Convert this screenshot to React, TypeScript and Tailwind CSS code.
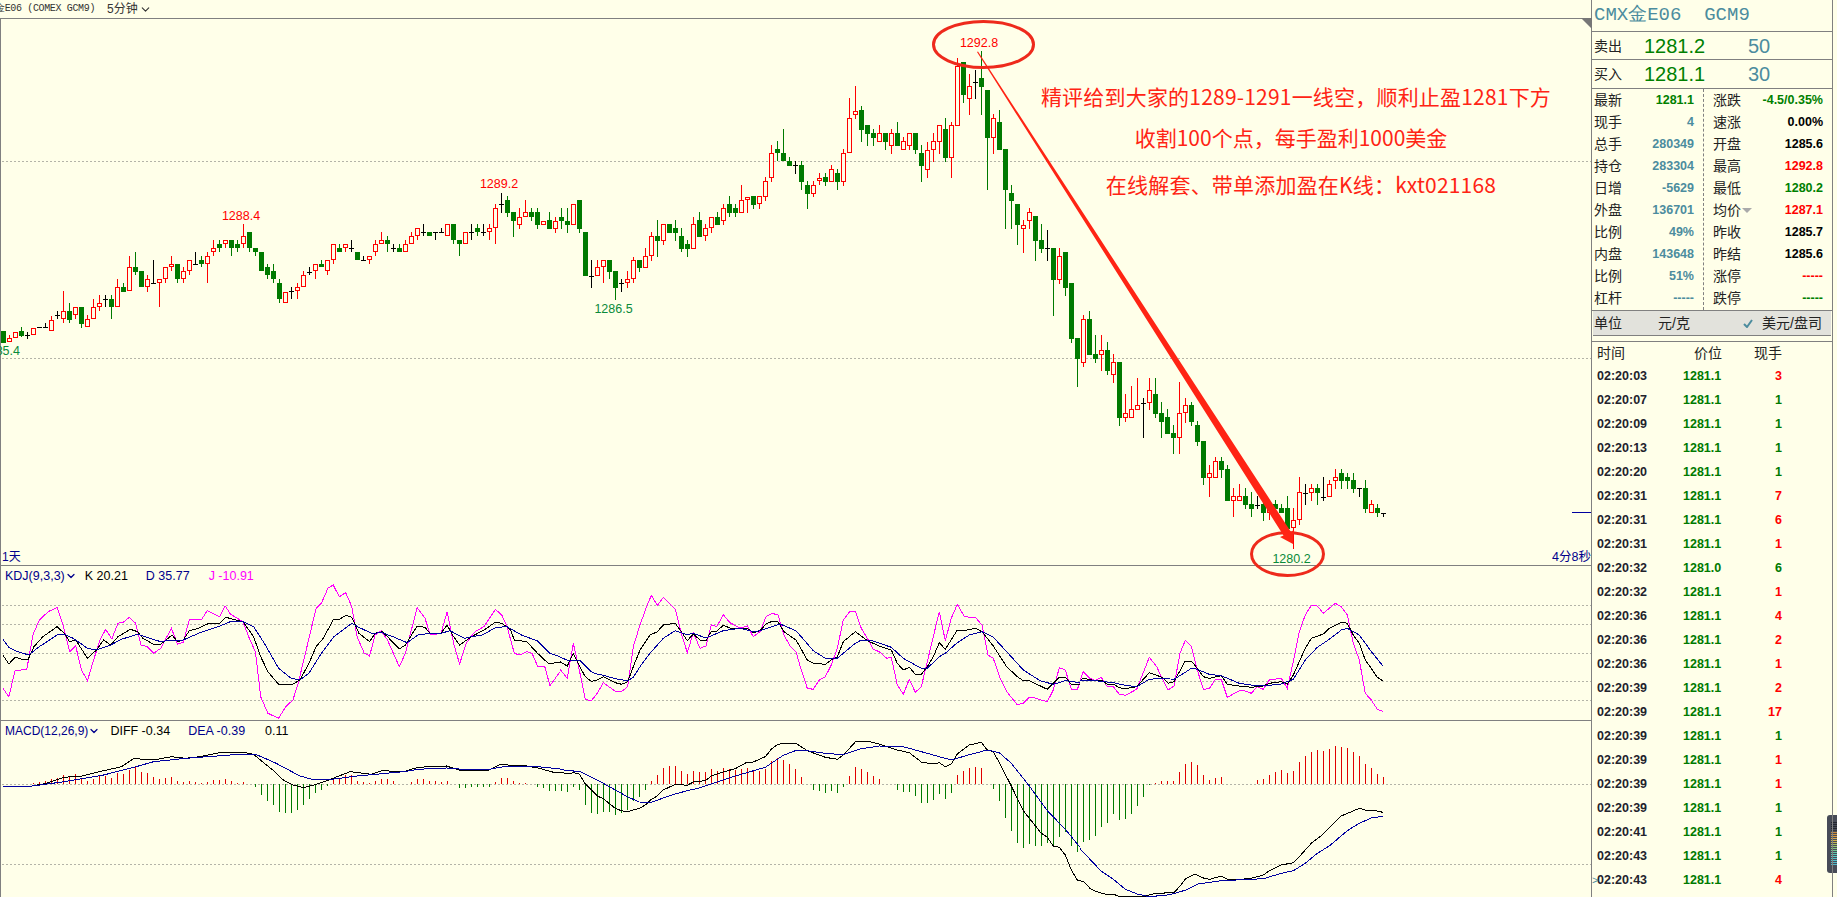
// CMX gold 5-minute chart with KDJ / MACD panes and the quote side panel.
// Chart series are traced from the picture, so the numbers are raw pixel reads.

import { ChevronDown } from 'lucide-react';

const SANS = "font-['Liberation_Sans','Noto_Sans_CJK_SC',sans-serif]";
const NOTE = "absolute left-[1039px] whitespace-nowrap text-center text-[21px] leading-[28px] text-[#ff2414] font-['Noto_Sans_CJK_SC',sans-serif]";

type Candle = [string, number, number, number?, number?];

// [kind, body top, body bottom, wick top, wick bottom], y in 3x picture pixels
const CANDLES: Candle[] = [
  ['g',993,1028],['r',1015,1027,1005,1027],['r',995,1015],['g',993,1007,981,1010],['k',1005,1005,995,1017],['r',983,1005],['k',982,982],['k',982,982,970,982],
  ['r',959,994,947,994],['k',946,946,934,958],['r',934,958,873,970],['g',934,959,909,970],['r',922,946,922,958],['g',922,971,922,983],['r',958,982,946,982],['r',922,958,898,958],
  ['r',910,922,885,934],['k',898,898,885,922],['g',898,922,885,958],['r',862,922,838,922],['g',862,875,850,875],['r',802,874,768,874],['g',802,815,757,826],['g',814,862],
  ['r',838,862,826,875],['k',850,850,780,850],['r',838,850,838,922],['r',802,838,802,850],['r',793,802,768,814],['g',793,838,793,850],['r',814,838,802,850],['r',781,814,781,826],
  ['k',793,793,757,793],['g',781,793,769,802],['r',769,793,757,850],['r',745,757,721,769],['g',733,745,721,757],['r',721,733,721,745],['g',721,745,721,769],['g',733,745,721,757],
  ['r',709,733,673,745],['g',697,745,697,757],['g',745,757,745,769],['g',757,814],['g',802,826,793,838],['g',814,838,793,850],['g',850,898,838,910],['r',875,910],
  ['k',874,874,862,898],['r',862,874,850,898],['r',826,862,814,862],['k',815,815,802,826],['r',793,814,793,838],['g',793,802,781,802],['r',781,814,781,826],['r',733,781,733,793],
  ['g',745,757,733,757],['r',733,745,733,757],['k',745,745,721,757],['g',757,781],['k',780,780,769,781],['r',769,781,769,793],['r',733,757,721,769],['r',721,733,697,733],
  ['g',721,733,709,757],['k',745,745,733,757],['g',745,757,733,757],['r',733,757,721,757],['r',709,733,697,733],['r',685,709,685,721],['k',697,697,673,709],['g',697,709],
  ['k',697,697,697,721],['k',697,697,685,697],['r',673,709],['g',673,721,673,733],['g',721,733,721,769],['r',697,733],['k',697,697,673,721],['g',685,697,673,709],
  ['k',697,697,673,709],['r',685,697,673,721],['r',625,685,613,733],['k',612,612,578,638],['g',600,638,588,650],['g',636,662,636,710],['r',650,674,625,686],['r',637,650,600,650],
  ['g',637,650,625,662],['g',637,674,625,686],['r',662,674],['g',660,686,637,686],['r',662,686,650,698],['g',650,662,625,686],['g',662,674,625,698],['r',613,674],
  ['g',600,686,600,698],['g',697,827],['k',827,827,780,863],['r',802,827,780,827],['r',781,802,781,850],['g',781,815,781,838],['g',813,863,813,899],['k',850,850,838,875],
  ['r',838,850,813,863],['r',781,838,770,850],['g',781,803,781,815],['r',769,803,745,803],['r',709,769,697,782],['g',709,722,660,770],['r',673,722,673,734],['g',673,698],
  ['g',685,698,660,722],['g',709,746,685,757],['g',733,746,721,770],['r',673,746,650,746],['g',660,710,637,710],['r',685,709,673,722],['r',650,685,650,698],['g',650,674,637,674],
  ['r',625,662,613,674],['g',613,638,588,650],['g',625,638,613,650],['r',601,638,555,638],['r',590,601,590,638],['g',589,614,589,626],['r',589,613,589,626],['r',544,590,532,602],
  ['r',460,533,436,545],['g',448,460,424,484],['g',460,484,388,484],['g',484,497,472,497],['k',495,495,484,521],['g',496,545,484,570],['g',556,581,544,627],['r',556,581,544,590],
  ['r',533,544,520,556],['g',532,545,520,557],['r',508,545,496,545],['g',520,545,508,570],['r',460,545,448,557],['r',355,460,295,460],['r',332,344,258,356],['g',331,389,319,425],
  ['g',376,401,376,437],['g',400,413,388,437],['r',400,425,376,425],['g',400,425,400,449],['r',400,437,388,461],['g',400,437,366,437],['r',424,449,412,449],['r',400,437,400,449],
  ['g',400,449,400,461],['g',460,497,436,545],['r',449,509,425,533],['r',424,449,400,485],['r',376,425,376,461],['g',388,473,354,485],['r',376,473,366,533],['r',198,377,175,377],
  ['g',187,285,187,308],['r',259,296,222,344],['k',247,247,210,296],['g',235,260,153,344],['g',271,413,271,570],['r',355,413,343,461],['g',367,449,331,449],['g',448,570,448,686],
  ['g',580,602,556,686],['g',613,674,613,734],['r',674,686,660,758],['r',637,662,625,686],['g',649,722,649,782],['g',720,747,673,759],['k',745,745,690,783],['g',744,840,744,948],
  ['r',768,840,744,852],['g',756,864,756,888],['g',849,1017,849,1029],['g',1014,1077,1014,1161],['r',957,1088,945,1101],['g',957,1065,933,1065],['g',1062,1077,1005,1089],['r',1050,1065,1005,1113],
  ['g',1050,1113,1026,1125],['r',1086,1125,1062,1149],['g',1086,1254,1086,1278],['r',1239,1254,1182,1266],['r',1227,1254,1158,1254],['r',1215,1230,1134,1230],['k',1208,1208,1194,1314],['r',1170,1209,1134,1230],
  ['g',1182,1242,1134,1254],['g',1239,1266,1206,1314],['g',1251,1302,1227,1302],['g',1299,1314,1275,1362],['r',1239,1314,1146,1362],['r',1215,1240,1194,1270],['g',1215,1266,1206,1278],['g',1275,1326,1263,1338],
  ['g',1323,1434,1323,1455],['r',1419,1434,1395,1491],['r',1383,1434,1371,1434],['g',1383,1410,1371,1434],['g',1407,1503,1395,1503],['r',1488,1503,1464,1551],['r',1488,1503,1452,1503],['g',1488,1515,1464,1527],
  ['g',1512,1527,1476,1551],['k',1515,1515,1488,1527],['g',1512,1539,1500,1563],['r',1512,1539,1512,1560],['g',1512,1527,1500,1540],['g',1524,1539,1512,1539],['g',1524,1587,1488,1587],['r',1560,1585,1524,1647],
  ['r',1476,1561,1431,1575],['k',1479,1479,1452,1515],['r',1464,1479,1452,1503],['g',1464,1479,1452,1515],['k',1490,1490,1431,1503],['r',1452,1490,1440,1490],['r',1431,1443,1407,1467],['g',1419,1443,1407,1467],
  ['g',1431,1443,1419,1467],['g',1440,1467,1419,1479],['k',1465,1465,1465,1491],['g',1464,1527,1440,1539],['r',1512,1539,1500,1539],['g',1524,1539,1512,1551],['k',1539,1539,1539,1551],
];

const KDJ_J6 = '8,445 25,470 42,392 75,388 92,285 110,240 135,215 160,202 175,250 195,335 212,318 228,390 245,422 262,360 280,300 296,268 313,297 330,250 345,247 362,232 380,250 395,315 412,320 430,340 450,325 480,265 497,312 513,307 530,240 565,238 580,212 615,230 630,197 645,222 680,245 700,300 715,335 730,470 750,520 780,535 800,500 820,480 835,430 855,340 885,205 900,190 918,145 933,135 950,170 968,158 985,200 1000,290 1020,340 1035,348 1050,285 1067,272 1085,300 1118,380 1135,340 1168,203 1190,235 1205,285 1235,280 1252,215 1270,310 1287,372 1305,310 1330,275 1355,260 1387,208 1405,225 1420,260 1440,340 1455,345 1475,335 1490,340 1505,378 1525,378 1540,437 1568,395';
const KDJ_J7 = '0,328 22,355 40,250 58,330 76,418 94,422 112,400 130,368 166,394 185,394 203,380 220,260 240,195 258,145 274,106 292,136 310,112 346,148 364,220 382,278 400,218 420,265 438,258 454,194 470,200 490,164 510,188 540,204 562,198 580,230 600,215 618,170 636,160 654,165 672,225 690,258 708,275 724,330 742,385 760,388 778,360 796,350 814,315 832,265 850,180 868,156 886,154 904,205 922,235 940,268 958,275 980,295 994,292 1012,375 1030,403 1048,358 1066,397 1084,380 1120,230 1138,155 1156,242 1174,175 1192,133 1212,168 1228,172 1246,172 1266,195 1284,285 1300,295 1320,355 1340,395 1372,434 1390,430 1408,412 1426,414 1444,420 1462,425 1480,390 1498,323 1516,330 1534,388 1552,388 1560,368';
const KDJ_J8 = '0,362 10,335 30,355 46,362 64,352 80,378 100,380 118,403 136,406 170,388 208,292 230,320 246,355 264,390 282,378 300,280 316,241 334,258 352,330 370,388 388,386 406,358 424,358 442,412 478,392 496,393 514,400 532,380 550,388 568,360 604,355 622,385 640,305 658,215 676,165 694,136 712,138 730,160 766,130 784,140 802,165 820,250 838,300 856,400 874,420 892,448 908,454';

const KDJ_K6 = '8,345 25,372 42,352 60,357 78,360 95,320 120,290 160,260 180,280 195,305 212,300 245,355 270,330 290,300 310,315 330,290 365,268 385,275 400,295 430,313 450,313 482,285 497,305 513,300 530,272 555,265 585,250 615,250 632,232 680,245 710,290 730,350 750,395 780,433 815,435 840,420 865,370 885,320 905,295 933,240 950,238 970,226 985,232 1005,280 1035,305 1050,280 1070,275 1085,290 1118,327 1135,315 1168,258 1190,262 1205,282 1235,280 1252,255 1270,290 1287,315 1320,290 1355,270 1387,247 1405,250 1430,270 1440,300 1475,305 1505,340 1535,370 1568,368';
const KDJ_K7 = '0,305 22,318 40,280 58,318 76,350 94,364 112,360 130,350 166,368 185,373 203,365 220,320 240,270 270,225 292,215 310,195 346,190 364,215 382,242 400,222 420,240 438,242 454,214 470,214 490,196 510,204 540,205 562,205 580,218 600,212 618,192 636,184 654,186 672,215 708,240 742,300 760,310 796,313 814,300 832,290 850,245 886,215 904,228 922,242 958,258 994,270 1012,310 1030,330 1048,322 1066,343 1084,343 1102,320 1120,290 1138,248 1156,268 1192,210 1212,212 1246,205 1266,215 1300,258 1340,320 1372,350 1390,362 1408,362 1462,388 1498,352 1516,352 1534,373 1560,372';
const KDJ_K8 = '0,362 10,355 46,362 64,360 80,372 100,372 118,383 136,386 170,380 208,338 246,352 264,370 282,365 316,303 334,303 352,325 370,350 388,355 424,347 442,373 478,378 514,382 550,378 568,370 604,365 622,372 640,345 676,265 694,235 730,222 748,205 784,187 802,190 820,225 838,250 856,300 874,325 892,352 908,362';

const KDJ_D6 = '8,298 25,322 42,332 80,345 110,320 160,285 180,283 205,295 245,325 270,330 310,315 340,298 385,283 420,295 450,305 482,300 513,300 560,278 610,260 650,243 680,245 710,260 740,310 780,385 815,415 840,420 865,400 900,340 935,290 985,250 1005,262 1040,280 1070,278 1100,290 1140,308 1170,285 1205,280 1235,280 1260,272 1300,295 1320,290 1350,285 1390,262 1420,260 1460,285 1505,303 1540,340 1568,350';
const KDJ_D7 = '0,292 22,300 58,300 94,335 112,343 130,346 166,356 203,362 220,352 240,320 270,280 310,235 346,212 382,224 400,220 438,234 490,212 540,205 580,215 600,212 660,192 708,212 760,272 796,295 832,295 886,250 904,240 940,243 994,262 1030,295 1084,325 1102,325 1138,290 1156,280 1192,248 1228,225 1266,215 1300,232 1340,275 1390,330 1440,362 1480,373 1516,362 1560,368';
const KDJ_D8 = '0,362 46,362 100,368 136,376 170,380 208,358 246,355 282,358 316,337 334,325 352,328 388,343 424,347 478,370 514,375 550,378 604,372 640,358 676,300 712,262 748,238 784,210 802,205 838,225 872,272 908,317';

const MACD_K6 = '8,738 90,738 130,730 180,712 230,708 290,692 340,680 375,655 400,658 440,658 480,650 520,655 560,650 620,637 680,637 710,643 740,670 770,695 790,718 820,735 850,743 880,735 920,720 980,695 1040,703 1070,692 1130,695 1170,682 1250,678 1285,690 1370,690 1400,674 1470,677 1510,685 1550,697 1568,697';
const MACD_K7 = '0,636 22,642 40,638 58,642 76,672 94,690 112,708 130,716 166,745 184,752 202,755 238,745 256,735 274,718 292,708 310,690 346,673 382,676 400,666 418,664 436,662 454,648 490,636 526,626 562,606 580,606 616,590 634,568 652,554 670,550 708,550 742,572 796,592 832,598 850,585 886,546 904,544 930,545 958,552 1012,570 1048,578 1084,606 1120,612 1138,608 1156,620 1174,612 1192,582 1228,555 1264,547 1282,570 1300,575 1318,608 1354,678 1390,752 1444,820 1462,832 1480,858 1498,862 1516,885 1534,930 1552,960 1560,962';
const MACD_K8 = '0,962 12,966 30,985 46,994 82,1004 100,1002 118,1010 190,1010 226,1000 282,998 300,978 318,955 346,942 372,955 390,958 424,948 442,958 470,959 514,955 550,945 568,932 604,915 640,908 658,890 694,850 730,822 766,785 784,768 838,745 856,750 880,750 908,757';
const MACD_D6 = '8,738 90,738 180,725 290,705 375,682 430,665 520,655 620,647 680,642 720,645 770,668 840,708 880,720 930,718 1000,708 1130,695 1170,688 1250,684 1310,689 1370,688 1420,678 1490,678 1568,687';
const MACD_D7 = '0,628 22,632 58,634 94,652 130,670 166,690 202,710 238,726 274,727 310,714 346,702 382,692 418,684 454,672 526,648 616,622 670,586 706,572 742,572 796,580 850,584 904,566 958,558 1030,560 1066,570 1138,590 1174,600 1228,584 1282,570 1318,578 1354,610 1408,678 1462,752 1516,808 1560,862';
const MACD_D8 = '0,866 30,898 64,934 100,958 136,988 172,1002 208,1010 270,1004 318,990 354,972 424,962 514,958 550,956 604,940 640,932 676,910 712,880 748,858 802,812 838,790 874,774 908,769';

// Histogram tops in 3x pixels, one per candle, read from three separate crops.
const BARS_6 = [732,733,733,732,733,728,726,724,718,714,706,710,703,718,722,716,708,707,714,700,701,690,682,696,700,711,716,714,711,723,727,723,727,728,727,720,720,717,723,728,726,733,740,765,782,795,815,820,818,810,795,777,760,750,738,720,716,706,706,722,727,730,723,717,716,723,731,731,727,718,716,722,723,725,723,733,744,743,741,741,741,740,727,714,713,722,729,730,733,741,744,752,752];
const BARS_7 = [693,696,681,690,735,758,762,755,755,764,758,750,722,710,690,663,645,624,618,618,632,642,632,636,636,627,633,624,627,630,627,624,632,632,627,604,595,600,612,627,651,671,690,693,698,692,698,681,648,621,627,636,648,657,671,672,690,696,696,708,728,729,720,702,717,698,645,633,624,621,624,671,687,722,774,813,849,863,852,858,858,850,860,830,815,858,875];
const BARS_8 = [845,840,828,800,790,762,780,777,762,738,712,675,669,663,663,663,636,612,606,615,645,660,654,651,671,673,671,671,671,660,657,645,636,630,639,633,606,588,576,570,573,567,558,561,564,576,588,612,624,642,651];

const QUOTE_LEFT: [string, string, string][] = [
  ['最新', '1281.1', 'text-[#008000]'],
  ['现手', '4', 'text-[#4c8c9e]'],
  ['总手', '280349', 'text-[#4c8c9e]'],
  ['持仓', '283304', 'text-[#4c8c9e]'],
  ['日增', '-5629', 'text-[#4c8c9e]'],
  ['外盘', '136701', 'text-[#4c8c9e]'],
  ['比例', '49%', 'text-[#4c8c9e]'],
  ['内盘', '143648', 'text-[#4c8c9e]'],
  ['比例', '51%', 'text-[#4c8c9e]'],
  ['杠杆', '-----', 'text-[#4c8c9e]'],
];

const QUOTE_RIGHT: [string, string, string][] = [
  ['涨跌', '-4.5/0.35%', 'text-[#008000]'],
  ['速涨', '0.00%', 'text-black'],
  ['开盘', '1285.6', 'text-black'],
  ['最高', '1292.8', 'text-[#ff0000]'],
  ['最低', '1280.2', 'text-[#008000]'],
  ['均价', '1287.1', 'text-[#ff0000]'],
  ['昨收', '1285.7', 'text-black'],
  ['昨结', '1285.6', 'text-black'],
  ['涨停', '-----', 'text-[#ff0000]'],
  ['跌停', '-----', 'text-[#008000]'],
];

const TICKS: [string, string, string, boolean][] = [
  ['02:20:03', '1281.1', '3', true],
  ['02:20:07', '1281.1', '1', false],
  ['02:20:09', '1281.1', '1', false],
  ['02:20:13', '1281.1', '1', false],
  ['02:20:20', '1281.1', '1', false],
  ['02:20:31', '1281.1', '7', true],
  ['02:20:31', '1281.1', '6', true],
  ['02:20:31', '1281.1', '1', true],
  ['02:20:32', '1281.0', '6', false],
  ['02:20:32', '1281.1', '1', true],
  ['02:20:36', '1281.1', '4', true],
  ['02:20:36', '1281.1', '2', true],
  ['02:20:36', '1281.1', '1', true],
  ['02:20:39', '1281.1', '2', true],
  ['02:20:39', '1281.1', '17', true],
  ['02:20:39', '1281.1', '1', false],
  ['02:20:39', '1281.1', '1', true],
  ['02:20:39', '1281.1', '1', true],
  ['02:20:39', '1281.1', '1', false],
  ['02:20:41', '1281.1', '1', false],
  ['02:20:43', '1281.1', '1', false],
  ['02:20:43', '1281.1', '4', true],
];

const LEDS = ['#23262e','#23262e','#23262e','#23262e','#33343a','#c98a3c','#d0923e','#d99a40','#d9a848','#d0b04c','#c8b850','#a8c060','#98c46c','#88c878','#70c890','#60c8a8','#58c8b8','#58c8c0','#50c0c8','#50c0c8','#50b8c8','#50b8c8'];

// "zx,zy zx,zy" from a crop back to page coordinates
function points(raw: string, ox: number, oy: number, fx: number) {
  return raw
    .split(' ')
    .map((p) => {
      const [zx, zy] = p.split(',').map(Number);
      return `${(ox + zx / fx).toFixed(1)},${(oy + zy / 3).toFixed(1)}`;
    })
    .join(' ');
}

function Trace({ raw, color, ox, oy, fx }: { raw: string; color: string; ox: number; oy: number; fx: number }) {
  return <polyline points={points(raw, ox, oy, fx)} fill="none" stroke={color} strokeWidth={1} shapeRendering="crispEdges" />;
}

function Dotted({ y }: { y: number }) {
  return <line x1={2} x2={1591} y1={y + 0.5} y2={y + 0.5} stroke="#b4b4a8" strokeWidth={1} strokeDasharray="2 2" />;
}

function CandleMark({ c, i }: { c: Candle; i: number }) {
  const x = 3 + 6 * i;
  const [kind, top3, bot3, hi3 = top3, lo3 = bot3] = c;
  const top = Math.round(top3 / 3);
  const bot = Math.round(bot3 / 3);
  const hi = Math.round(hi3 / 3);
  const lo = Math.round(lo3 / 3);
  const color = kind === 'g' ? '#007a00' : kind === 'r' ? '#ff0000' : '#000000';
  return (
    <g shapeRendering="crispEdges">
      {lo > hi && <rect x={x} y={hi} width={1} height={lo - hi} fill={color} />}
      {kind === 'k' && <rect x={x - 2} y={top} width={5} height={1} fill={color} />}
      {kind === 'g' && <rect x={x - 2} y={top} width={5} height={bot - top} fill={color} />}
      {kind === 'r' && <rect x={x - 1.5} y={top + 0.5} width={4} height={bot - top - 1} fill="#ffffe9" stroke={color} />}
    </g>
  );
}

function ChartLabel({ x, y, color, anchor = 'middle', children }: { x: number; y: number; color: string; anchor?: 'middle' | 'end'; children: string }) {
  return (
    <text x={x} y={y} textAnchor={anchor} dominantBaseline="central" fill={color} fontSize={12.5} fontFamily="Liberation Sans, sans-serif">
      {children}
    </text>
  );
}

function MainChart() {
  return (
    <div className="relative h-[547px] border-b border-l border-[#808080]">
      <svg className="block h-full w-full overflow-visible" viewBox="1 19 1590 546" preserveAspectRatio="none">
        <Dotted y={161} />
        <Dotted y={358} />
        {CANDLES.map((c, i) => (
          <CandleMark key={i} c={c} i={i} />
        ))}
        <rect x={1572} y={512} width={19} height={1} fill="#0000a0" shapeRendering="crispEdges" />
        <ChartLabel x={241} y={216} color="#ff0000">1288.4</ChartLabel>
        <ChartLabel x={499} y={184} color="#ff0000">1289.2</ChartLabel>
        <ChartLabel x={613.5} y={309} color="#0a8a3a">1286.5</ChartLabel>
        <ChartLabel x={979} y={43} color="#ff0000">1292.8</ChartLabel>
        <ChartLabel x={1291.5} y={559} color="#0a8a3a">1280.2</ChartLabel>
        <ChartLabel x={20} y={351} color="#0a8a3a" anchor="end">1285.4</ChartLabel>
        <ellipse cx={983.5} cy={44.5} rx={50} ry={23} fill="none" stroke="#ee2a1c" strokeWidth={3} />
        <ellipse cx={1287.5} cy={554} rx={36} ry={21.5} fill="none" stroke="#ee2a1c" strokeWidth={3} />
        <polygon points="977,52 978,51.5 1291,532 1293.5,530 1293,544 1280,537 1283.5,535.5" fill="#ff2414" />
      </svg>
      <span className={`absolute bottom-0 left-[1px] text-[12px] leading-[16px] text-[#00008c] ${SANS}`}>1天</span>
      <span className={`absolute bottom-0 right-[-14px] w-[53px] overflow-hidden whitespace-nowrap text-[12.5px] leading-[16px] text-[#00008c] ${SANS}`}>4分8秒</span>
      <div className={`${NOTE} top-[63px] w-[512px] tracking-[0.2px]`}>
        精评给到大家的1289-1291一线空，顺利止盈1281下方
      </div>
      <div className={`${NOTE} top-[104px] w-[502px]`}>
        收割100个点，每手盈利1000美金
      </div>
      <div className={`${NOTE} top-[151px] w-[522px] tracking-[0.2px]`}>
        在线解套、带单添加盈在K线：kxt021168
      </div>
    </div>
  );
}

function KdjPane() {
  return (
    <div className="relative h-[155px] border-b border-l border-[#808080]">
      <svg className="block h-full w-full" viewBox="1 566 1590 154" preserveAspectRatio="none">
        {[605, 624, 653, 681, 700].map((y) => (
          <Dotted key={y} y={y} />
        ))}
        <Trace raw={KDJ_J6} color="#ff00ff" ox={0} oy={540} fx={2.8} />
        <Trace raw={KDJ_J7} color="#ff00ff" ox={560} oy={560} fx={3} />
        <Trace raw={KDJ_J8} color="#ff00ff" ox={1080} oy={560} fx={3} />
        <Trace raw={KDJ_K6} color="#000000" ox={0} oy={540} fx={2.8} />
        <Trace raw={KDJ_K7} color="#000000" ox={560} oy={560} fx={3} />
        <Trace raw={KDJ_K8} color="#000000" ox={1080} oy={560} fx={3} />
        <Trace raw={KDJ_D6} color="#0000a0" ox={0} oy={540} fx={2.8} />
        <Trace raw={KDJ_D7} color="#0000a0" ox={560} oy={560} fx={3} />
        <Trace raw={KDJ_D8} color="#0000a0" ox={1080} oy={560} fx={3} />
      </svg>
      <div className={`absolute left-[4px] top-[2px] flex items-center text-[12.5px] leading-[16px] ${SANS}`}>
        <span className="text-[#00008c]">KDJ(9,3,3)</span>
        <ChevronDown className="h-3 w-3 text-[#00008c]" strokeWidth={2.5} />
        <span className="ml-[8px] text-black">K 20.21</span>
        <span className="ml-[18px] text-[#00008c]">D 35.77</span>
        <span className="ml-[19px] text-[#ff00ff]">J -10.91</span>
      </div>
    </div>
  );
}

function Bars({ tops, start, base, oy }: { tops: number[]; start: number; base: number; oy: number }) {
  return (
    <g shapeRendering="crispEdges">
      {tops.map((t, k) => {
        const top = Math.round(oy + t / 3);
        const zero = Math.round(oy + base / 3);
        if (top === zero) return null;
        return (
          <rect
            key={k}
            x={3 + 6 * (start + k)}
            y={Math.min(top, zero)}
            width={1}
            height={Math.abs(top - zero)}
            fill={top < zero ? '#e00000' : '#007a00'}
          />
        );
      })}
    </g>
  );
}

function MacdPane() {
  return (
    <div className="relative flex-1 overflow-hidden border-l border-[#808080]">
      <svg className="block h-full w-full" viewBox="1 721 1590 176" preserveAspectRatio="none">
        <Dotted y={784} />
        <Dotted y={864} />
        <Bars tops={BARS_6} start={0} base={733} oy={540} />
        <Bars tops={BARS_7} start={93} base={673} oy={560} />
        <Bars tops={BARS_8} start={180} base={673} oy={560} />
        <Trace raw={MACD_K6} color="#000000" ox={0} oy={540} fx={2.8} />
        <Trace raw={MACD_K7} color="#000000" ox={560} oy={560} fx={3} />
        <Trace raw={MACD_K8} color="#000000" ox={1080} oy={560} fx={3} />
        <Trace raw={MACD_D6} color="#0000a0" ox={0} oy={540} fx={2.8} />
        <Trace raw={MACD_D7} color="#0000a0" ox={560} oy={560} fx={3} />
        <Trace raw={MACD_D8} color="#0000a0" ox={1080} oy={560} fx={3} />
      </svg>
      <div className={`absolute left-[4px] top-[2px] flex items-center text-[12.5px] leading-[16px] ${SANS}`}>
        <span className="text-[12px] text-[#00008c]">MACD(12,26,9)</span>
        <ChevronDown className="h-3 w-3 text-[#00008c]" strokeWidth={2.5} />
        <span className="ml-[10px] text-black">DIFF -0.34</span>
        <span className="ml-[18px] text-[#00008c]">DEA -0.39</span>
        <span className="ml-[20px] text-black">0.11</span>
      </div>
    </div>
  );
}

function BookRow({ label, price, size, height }: { label: string; price: string; size: string; height: string }) {
  return (
    <div className={`flex items-center border-b border-[#808080] pl-[2px] ${height}`}>
      <span className={`w-[50px] text-[14px] leading-none text-[#222] ${SANS}`}>{label}</span>
      <span className={`w-[104px] text-[20px] leading-none text-[#008000] ${SANS}`}>{price}</span>
      <span className={`text-[20px] leading-none text-[#4c8c9e] ${SANS}`}>{size}</span>
    </div>
  );
}

function QuoteColumn({ rows, className, marker }: { rows: [string, string, string][]; className: string; marker?: string }) {
  return (
    <div className={className}>
      {rows.map(([label, value, color]) => (
        <div key={label + value} className="flex h-[22px] items-center justify-between">
          <span className={`relative text-[14px] leading-none text-[#222] ${SANS}`}>
            {label}
            {label === marker && (
              <span className="absolute left-[29px] top-[5px] h-0 w-0 border-x-[5px] border-t-[5px] border-x-transparent border-t-[#aaaaaa]" />
            )}
          </span>
          <span className={`text-[12.5px] font-bold leading-none ${color} ${SANS}`}>{value}</span>
        </div>
      ))}
    </div>
  );
}

function SidePanel() {
  return (
    <aside className="relative z-10 flex w-[242px] shrink-0 flex-col border-x border-[#808080]">
      <svg className="absolute left-[-11px] top-[18px] h-[11px] w-[11px]" viewBox="0 0 11 11">
        <polygon points="0,0 11,0 11,11" fill="#777777" />
      </svg>
      <div className="flex h-[32px] items-center border-b border-[#808080] pl-[2px] font-mono text-[19px] leading-none whitespace-pre text-[#4c8c9e]">
        CMX金E06  GCM9
      </div>
      <BookRow label="卖出" price="1281.2" size="50" height="h-[28px]" />
      <BookRow label="买入" price="1281.1" size="30" height="h-[29px]" />
      <div className="flex h-[222px] border-b border-[#808080]">
        <QuoteColumn rows={QUOTE_LEFT} className="w-[112px] border-r border-dashed border-[#808080] pb-[1px] pl-[2px] pr-[9px]" />
        <QuoteColumn rows={QUOTE_RIGHT} marker="均价" className="flex-1 pl-[9px] pr-[9px]" />
      </div>
      <div className={`mx-[1px] flex h-[25px] items-center border-b border-[#808080] bg-[#e2e2dc] pl-[1px] pr-[9px] text-[14px] leading-none text-[#222] ${SANS}`}>
        <span>单位</span>
        <span className="ml-[36px]">元/克</span>
        <svg className="ml-[53px] h-[9px] w-[10px]" viewBox="0 0 10 9">
          <path d="M1 5l3 3 5-7" fill="none" stroke="#4c8c9e" strokeWidth={2} />
        </svg>
        <span className="ml-auto">美元/盘司</span>
      </div>
      <div className="h-[6px] border-b border-[#808080]" />
      <div className={`flex h-[22px] items-center pl-[5px] text-[14px] leading-none text-[#222] ${SANS}`}>
        <span className="w-[97px]">时间</span>
        <span className="w-[60px]">价位</span>
        <span>现手</span>
      </div>
      {TICKS.map(([time, price, vol, up], i) => (
        <div key={i} className={`relative flex h-[24.04px] items-center pl-[5px] text-[12.5px] font-bold leading-none ${SANS}`}>
          {i === TICKS.length - 1 && (
            <span className="absolute left-0 text-[11px] font-normal text-[#4c8c9e]">&gt;</span>
          )}
          <span className="w-[86px] text-[#22222c]">{time}</span>
          <span className="w-[42px] text-[#007a00]">{price}</span>
          <span className={`w-[57px] text-right ${up ? 'text-[#ff0000]' : 'text-[#007a00]'}`}>{vol}</span>
        </div>
      ))}
    </aside>
  );
}

export default function App() {
  return (
    <div className="relative flex h-[897px] w-[1837px] overflow-hidden bg-[#ffffe9]">
      <main className="flex w-[1591px] shrink-0 flex-col">
        <header className="flex h-[19px] items-center overflow-hidden border-b border-[#808080] pl-[1px] text-[#333]">
          <span className="ml-[-6px] font-mono text-[10px] leading-none tracking-[-0.35px] whitespace-pre">金E06 (COMEX GCM9)</span>
          <span className={`ml-[12px] text-[12px] leading-none ${SANS}`}>5分钟</span>
          <ChevronDown className="ml-[1px] h-[13px] w-[13px]" strokeWidth={2} />
        </header>
        <MainChart />
        <KdjPane />
        <MacdPane />
      </main>
      <SidePanel />
      <div className="absolute right-0 top-[815px] flex h-[58px] w-[10px] flex-col gap-[1px] rounded-l-[3px] bg-[#474b57] py-[7px] pl-[4px]">
        {LEDS.map((c, i) => (
          <span key={i} className="h-[1px] w-full" style={{ backgroundColor: c }} />
        ))}
      </div>
    </div>
  );
}
